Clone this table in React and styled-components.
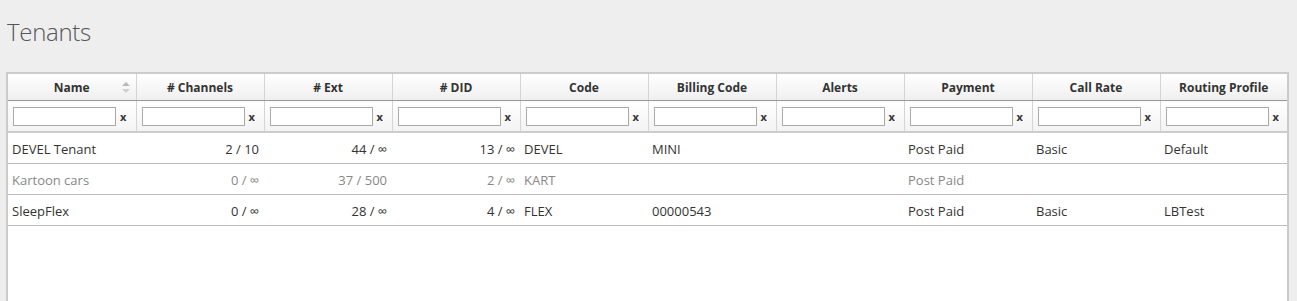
import React from 'react'
import styled, { createGlobalStyle } from 'styled-components'

const GlobalStyle = createGlobalStyle`
    body {
        margin: 0;
        background: #eeeeee;
        font-family: "Open Sans", "Liberation Sans", sans-serif;
        color: #333;
    }
`

const Page = styled.div`
    padding: 19px 8px 0 6px;
`

const Title = styled.h1`
    margin: 0 0 27px 1px;
    font-size: 24px;
    line-height: 26px;
    font-weight: 300;
    color: #555;
    letter-spacing: -0.3px;
`

const Panel = styled.div`
    border: 2px solid #cccccc;
    background: #fff;
    height: 260px;
`

const Table = styled.table`
    width: 100%;
    border-collapse: collapse;
    table-layout: fixed;
`

const Col = styled.col`
    width: ${props => props.w}px;
`

const HeadCell = styled.th`
    position: relative;
    height: 26px;
    padding: 0 4px;
    font-size: 12px;
    font-weight: 700;
    color: #333;
    text-align: center;
    background: linear-gradient(#ffffff, #efefef);
    border-right: 1px solid #d4d4d4;
    border-bottom: 1px solid #999;
    &:last-child { border-right: none; }
`

const SortIcon = styled.svg`
    position: absolute;
    right: 6px;
    top: 8px;
`

const FilterCell = styled.td`
    height: 30px;
    padding: 0 0 0 5px;
    background: linear-gradient(#ffffff, #f3f3f3);
    border-right: 1px solid #d4d4d4;
    border-bottom: 2px solid #cccccc;
    &:last-child { border-right: none; }
`

const FilterWrap = styled.div`
    display: flex;
    align-items: center;
    gap: 4px;
`

const FilterInput = styled.input`
    box-sizing: border-box;
    width: 103px;
    height: 19px;
    margin: 0;
    border: 1px solid #a9a9a9;
    background: #fff;
    padding: 0 3px;
    font-family: inherit;
    font-size: 12px;
`

const Clear = styled.span`
    font-size: 11px;
    font-weight: 700;
    color: #333;
    line-height: 1;
`

const Row = styled.tr`
    color: ${props => props.muted ? '#888' : '#333'};
`

const Cell = styled.td`
    height: 29px;
    padding: 1px 5px 0 4px;
    font-size: 13px;
    white-space: nowrap;
    text-align: ${props => props.num ? 'right' : 'left'};
    border-bottom: 1px solid #bbb;
`

const columns = ['Name', '# Channels', '# Ext', '# DID', 'Code', 'Billing Code', 'Alerts', 'Payment', 'Call Rate', 'Routing Profile']

const tenants = [
    { name: 'DEVEL Tenant', channels: '2 / 10', ext: '44 / ∞', did: '13 / ∞', code: 'DEVEL', billing: 'MINI', alerts: '', payment: 'Post Paid', rate: 'Basic', routing: 'Default' },
    { name: 'Kartoon cars', channels: '0 / ∞', ext: '37 / 500', did: '2 / ∞', code: 'KART', billing: '', alerts: '', payment: 'Post Paid', rate: '', routing: '', muted: true },
    { name: 'SleepFlex', channels: '0 / ∞', ext: '28 / ∞', did: '4 / ∞', code: 'FLEX', billing: '00000543', alerts: '', payment: 'Post Paid', rate: 'Basic', routing: 'LBTest' },
]

const App = () => {
    return (
        <Page>
            <GlobalStyle/>
            <Title>Tenants</Title>
            <Panel>
                <Table>
                    <colgroup>
                        {columns.map((c, i) => <Col key={c} w={i === columns.length - 1 ? 127 : 128}/>)}
                    </colgroup>
                    <thead>
                        <tr>
                            {columns.map((c, i) => (
                                <HeadCell key={c}>
                                    {c}
                                    {i === 0 && (
                                        <SortIcon width="8" height="11" viewBox="0 0 8 11">
                                            <path d="M4 0 L8 4 L0 4 Z" fill="#b8b8b8"/>
                                            <path d="M0 7 L8 7 L4 11 Z" fill="#cfcfcf"/>
                                        </SortIcon>
                                    )}
                                </HeadCell>
                            ))}
                        </tr>
                        <tr>
                            {columns.map(c => (
                                <FilterCell key={c}>
                                    <FilterWrap>
                                        <FilterInput type="text"/>
                                        <Clear>x</Clear>
                                    </FilterWrap>
                                </FilterCell>
                            ))}
                        </tr>
                    </thead>
                    <tbody>
                        {tenants.map(t => (
                            <Row key={t.name} muted={t.muted}>
                                <Cell>{t.name}</Cell>
                                <Cell num>{t.channels}</Cell>
                                <Cell num>{t.ext}</Cell>
                                <Cell num>{t.did}</Cell>
                                <Cell>{t.code}</Cell>
                                <Cell>{t.billing}</Cell>
                                <Cell>{t.alerts}</Cell>
                                <Cell>{t.payment}</Cell>
                                <Cell>{t.rate}</Cell>
                                <Cell>{t.routing}</Cell>
                            </Row>
                        ))}
                    </tbody>
                </Table>
            </Panel>
        </Page>
    )
}

export default App
